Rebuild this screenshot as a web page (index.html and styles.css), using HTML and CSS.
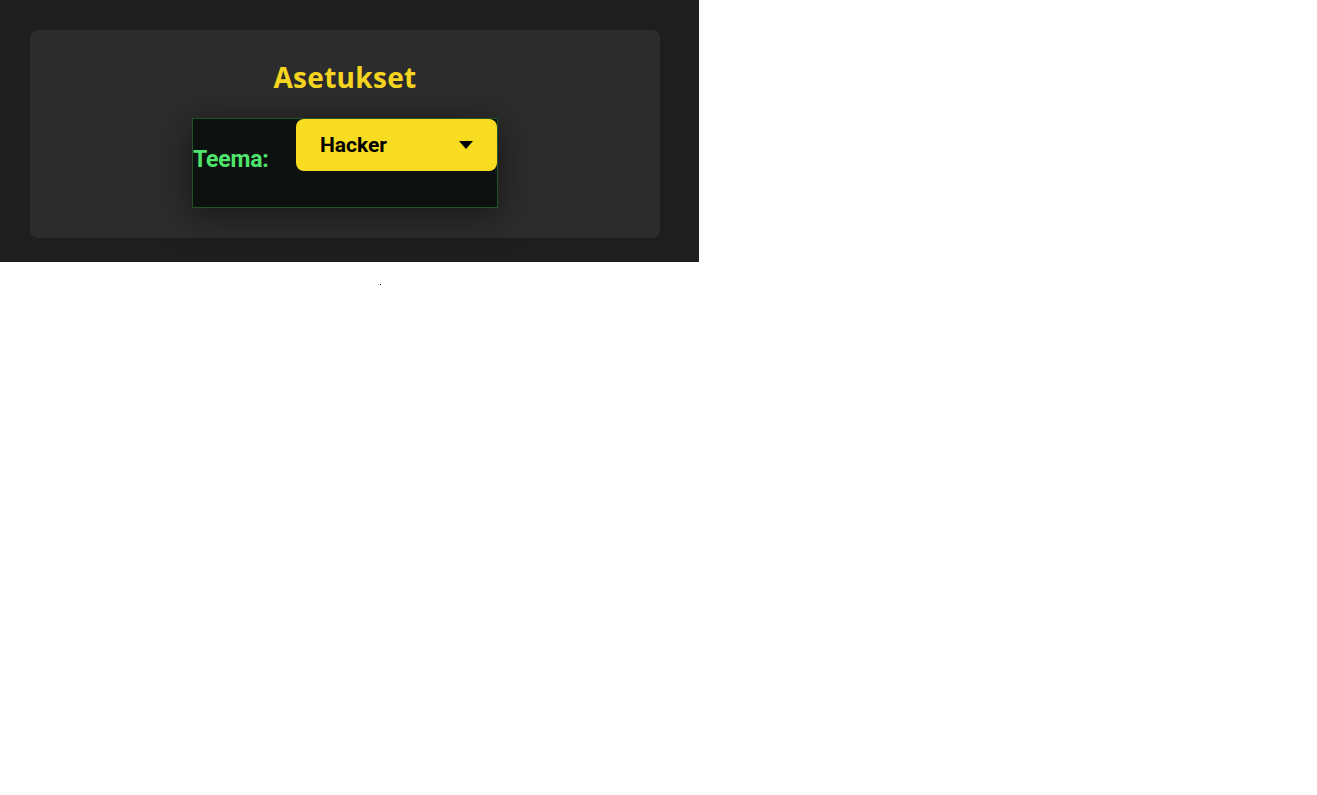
FILE: index.html
```html
<!DOCTYPE html>
<html lang="fi">
<head>
<meta charset="utf-8">
<title>Asetukset</title>
<link rel="stylesheet" href="styles.css">
</head>
<body>
<div class="app">
  <section class="card">
    <h1 class="title">Asetukset</h1>
    <div class="panel">
      <label class="label" for="theme">Teema:</label>
      <div class="select">
        <span class="select-value">Hacker</span>
        <svg class="caret" width="14" height="8" viewBox="0 0 14 8"><path d="M0 0 L14 0 L7 8 Z" fill="#000"/></svg>
      </div>
    </div>
  </section>
</div>
<div class="dot-row"><span class="dot"></span></div>
</body>
</html>
```
FILE: styles.css
```css
html, body {
  margin: 0;
  padding: 0;
  background: #ffffff;
}
.app {
  width: 699px;
  height: 262px;
  box-sizing: border-box;
  padding: 30px;
  background: #1e1e1e;
}
.card {
  width: 630px;
  height: 208px;
  box-sizing: border-box;
  background: #2c2c2c;
  border-radius: 8px;
  padding-top: 27px;
  display: flex;
  flex-direction: column;
  align-items: center;
}
.title {
  margin: 0 0 21px 0;
  font-family: "Open Sans", sans-serif;
  font-weight: 700;
  font-size: 28px;
  line-height: 40px;
  color: #f5d520;
  letter-spacing: 0.3px;
}
.panel {
  width: 306px;
  height: 90px;
  box-sizing: border-box;
  border: 1px solid #235427;
  background: #0d1110;
  box-shadow: 0 6px 36px rgba(0, 0, 0, 0.5);
  display: flex;
  align-items: flex-start;
  justify-content: space-between;
}
.label {
  margin-top: 28px;
  font-family: "Roboto", sans-serif;
  font-weight: 700;
  font-size: 23px;
  line-height: 26px;
  color: #4fe46b;
  letter-spacing: -0.2px;
}
.select {
  width: 201px;
  height: 52px;
  box-sizing: border-box;
  background: #f7dc22;
  border-radius: 8px;
  padding: 0 24px;
  display: flex;
  align-items: center;
  justify-content: space-between;
}
.select-value {
  font-family: "Roboto", sans-serif;
  font-weight: 700;
  font-size: 21px;
  color: #000;
}
.caret {
  display: block;
}
.dot-row {
  padding-top: 22px;
  width: 760px;
  display: flex;
  justify-content: center;
}
.dot {
  width: 1px;
  height: 1px;
  background: #000;
}
```
